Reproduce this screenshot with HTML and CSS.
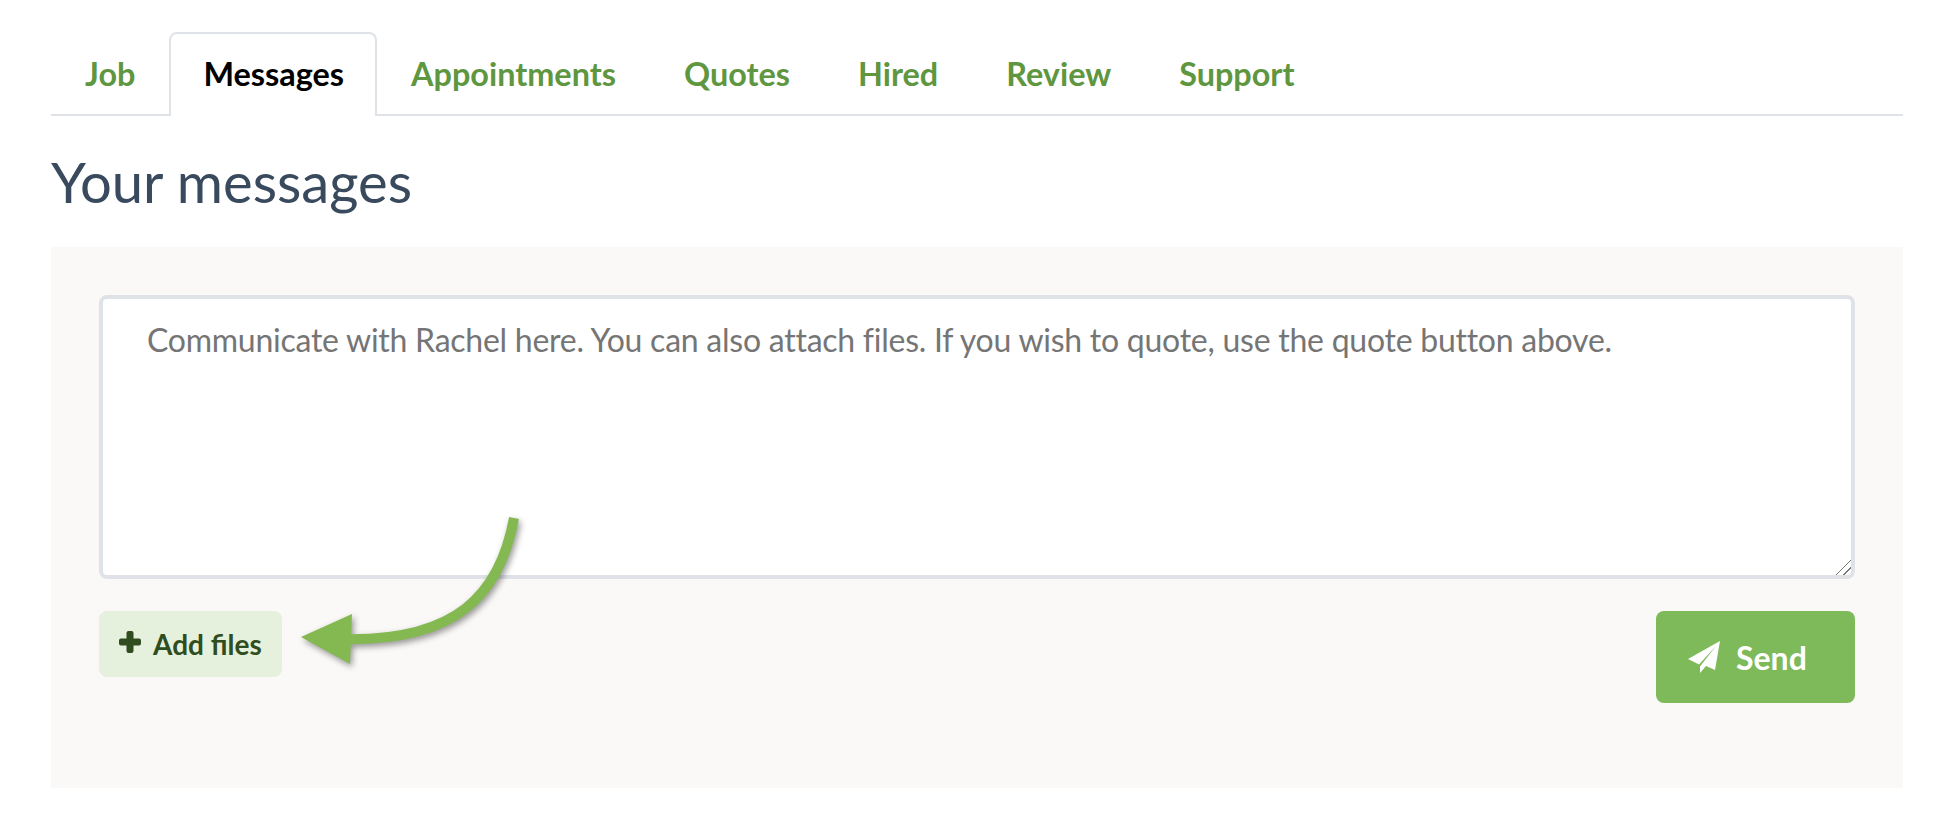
FILE: index.html
```html
<!DOCTYPE html>
<html lang="en">

<head>
    <meta charset="UTF-8">
    <title>Your messages</title>
    <link rel="stylesheet" href="styles.css">
</head>

<body>
    <div class="wrap">
        <ul class="tabs">
            <li class="tab"><a href="#">Job</a></li>
            <li class="tab active"><a href="#">Messages</a></li>
            <li class="tab"><a href="#">Appointments</a></li>
            <li class="tab"><a href="#">Quotes</a></li>
            <li class="tab"><a href="#">Hired</a></li>
            <li class="tab"><a href="#">Review</a></li>
            <li class="tab"><a href="#">Support</a></li>
        </ul>
        <h1 class="title">Your messages</h1>
        <div class="panel">
            <textarea class="msg" placeholder="Communicate with Rachel here. You can also attach files. If you wish to quote, use the quote button above."></textarea>
            <div class="actions">
                <button class="add-btn" type="button">
                    <svg class="plus" viewBox="0 0 22 22"><path d="M9.5 0h3a2 2 0 0 1 2 2v5.5H20a2 2 0 0 1 2 2v3a2 2 0 0 1-2 2h-5.500V20a2 2 0 0 1-2 2h-3a2 2 0 0 1-2-2v-5.500H2a2 2 0 0 1-2-2v-3a2 2 0 0 1 2-2h5.500V2a2 2 0 0 1 2-2z"/></svg>
                    Add files
                </button>
                <button class="send-btn" type="button">
                    <svg class="plane" viewBox="0 0 32 32"><path d="M32 0L0 18l11 5.5L28 5 12 25.5V32l6-7 9 4z"/></svg>
                    Send
                </button>
            </div>
            <!-- annotation arrow over the textarea and the button row -->
            <svg class="arrow" width="240" height="170" viewBox="0 0 240 170">
                <path class="arrow-line" d="M222 10C208 86 165 134 50 131"/>
                <polygon class="arrow-head" points="9,129 60,106 58,156"/>
            </svg>
        </div>
    </div>
</body>

</html>
```

FILE: styles.css
```css
* {
    margin: 0;
    padding: 0;
    box-sizing: border-box;
}

html {
    background: #fff;
}

body {
    font-family: Lato, "Liberation Sans", sans-serif;
}

.wrap {
    padding: 32px 45px 34px 51px;
}

.tabs {
    display: flex;
    list-style: none;
    height: 84px;
    border-bottom: 2px solid #dfe3e8;
    padding-left: 34px;
    gap: 68px;
}

.tab {
    height: 84px;
    line-height: 84px;
    font-size: 32.4px;
    font-weight: 700;
}

.tab a {
    color: #5f9640;
    text-decoration: none;
}

.tab.active {
    margin: 0 -34px;
    padding: 0 31px 0 32px;
    background: #fff;
    border: 2px solid #dfe3e8;
    border-bottom: 0;
    border-radius: 8px 8px 0 0;
    line-height: 80px;
}

.tab.active a {
    color: #000;
}

.title {
    margin-top: 33px;
    height: 98px;
    line-height: 66px;
    font-size: 56.2px;
    font-weight: 400;
    color: #3a4a5e;
}

.panel {
    position: relative;
    height: 541px;
    padding: 48px 48px 0;
    background: #faf9f7;
}

.msg {
    display: block;
    width: 100%;
    height: 284px;
    padding: 20px 44px;
    border: 4px solid #dfe3e8;
    border-radius: 8px;
    background: #fff;
    font-family: inherit;
    font-size: 32px;
    letter-spacing: -.25px;
    line-height: 42px;
    outline: none;
}

.msg::-webkit-resizer {
    background: linear-gradient(135deg, transparent 47%, #777 47%, #777 53%, transparent 53%, transparent 72%, #777 72%, #777 78%, transparent 78%);
}

.actions {
    display: flex;
    justify-content: space-between;
    align-items: flex-start;
    margin-top: 32px;
}

.add-btn,
.send-btn {
    display: flex;
    align-items: center;
    border: 0;
    font-family: inherit;
    font-weight: 700;
}

.add-btn {
    width: 183px;
    height: 66px;
    padding-left: 20px;
    gap: 12px;
    border-radius: 8px;
    background: #e5f1dd;
    color: #304d20;
    font-size: 28px;
}

.plus {
    width: 22px;
    height: 22px;
    margin-top: -4px;
    fill: #304d20;
}

.send-btn {
    width: 199px;
    height: 92px;
    padding-left: 32px;
    gap: 16px;
    border-radius: 8px;
    background: #7eba59;
    color: #fff;
    font-size: 32px;
}

.plane {
    width: 32px;
    height: 32px;
    fill: #fff;
}

.arrow {
    position: absolute;
    left: 241px;
    top: 261px;
    overflow: visible;
    filter: drop-shadow(2px 3px 3px rgba(0, 0, 0, .4));
}

.arrow-line {
    fill: none;
    stroke: #84b851;
    stroke-width: 10;
}

.arrow-head {
    fill: #84b851;
}
```
